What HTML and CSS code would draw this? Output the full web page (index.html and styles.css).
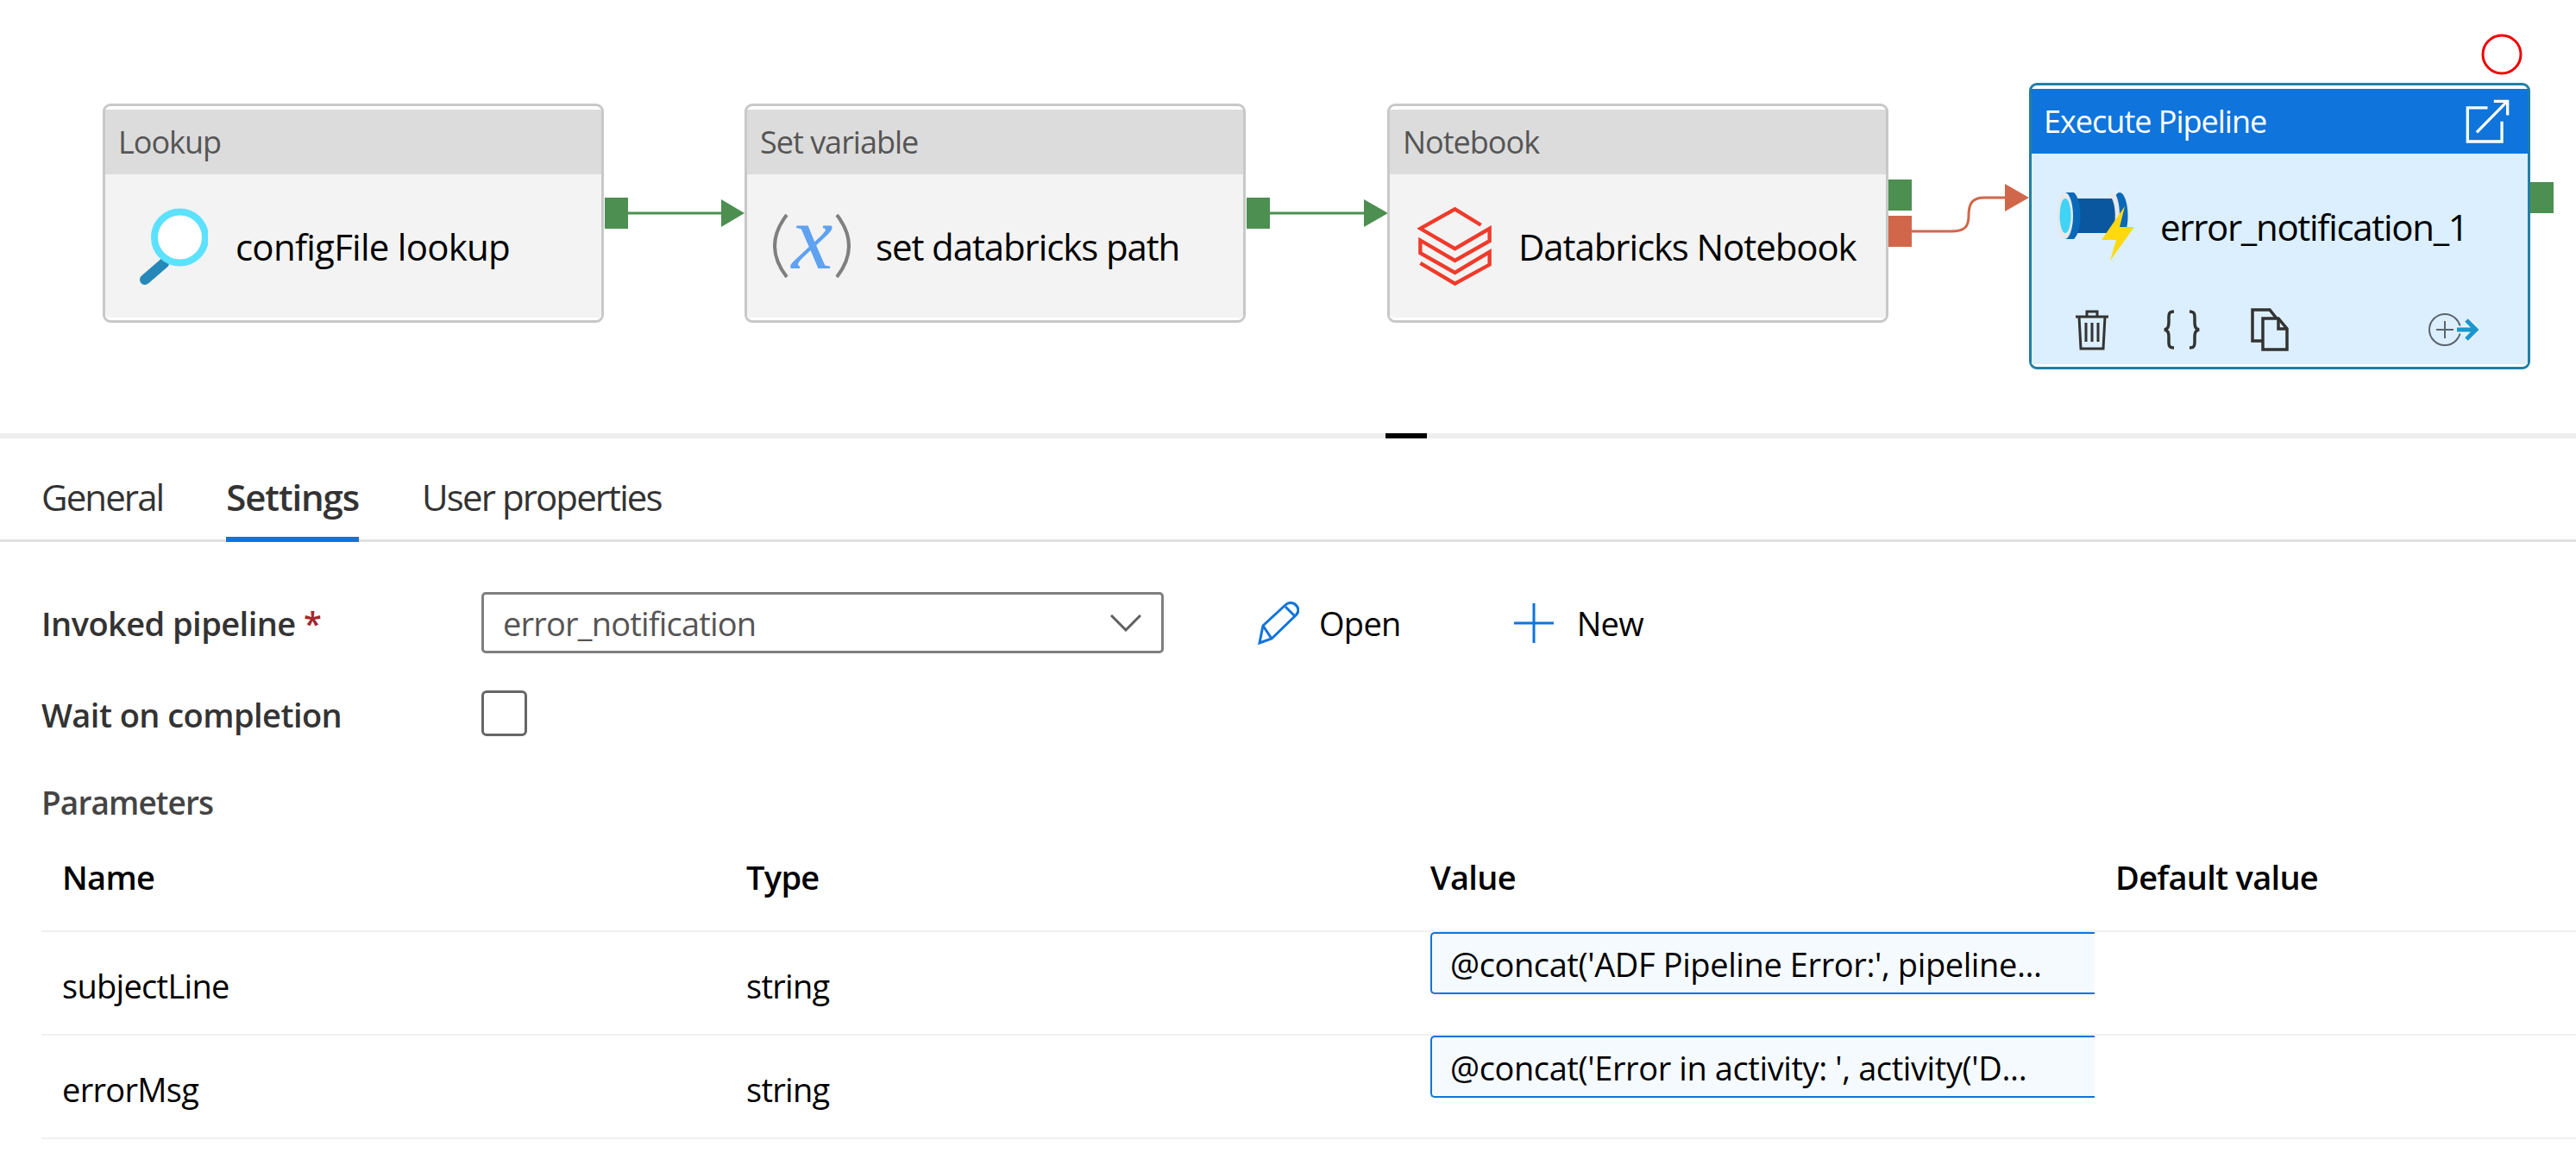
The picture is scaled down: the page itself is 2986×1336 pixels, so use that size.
FILE: index.html
```html
<!DOCTYPE html>
<html lang="en">
<head>
    <meta charset="UTF-8">
    <meta name="viewport" content="width=device-width, initial-scale=1.0">
    <title>Execute Pipeline settings</title>
    <link rel="stylesheet" href="styles.css">
</head>
<body>
    <!-- Pipeline canvas -->
    <div class="canvas">
        <svg class="wires" width="2986" height="502" viewBox="0 0 2986 502">
            <rect x="701" y="229" width="27" height="36" fill="#4c8f50"/>
            <path d="M728 247H840" stroke="#4c8f50" stroke-width="3" fill="none"/>
            <path d="M836 231L863 247L836 263Z" fill="#4c8f50"/>
            <rect x="1445" y="229" width="27" height="36" fill="#4c8f50"/>
            <path d="M1472 247H1585" stroke="#4c8f50" stroke-width="3" fill="none"/>
            <path d="M1581 231L1609 247L1581 263Z" fill="#4c8f50"/>
            <rect x="2189" y="208" width="27" height="36" fill="#4c8f50"/>
            <rect x="2189" y="250" width="27" height="36" fill="#d1674a"/>
            <path d="M2216 268H2262C2278 268 2282 262 2282 250C2282 236 2286 229 2300 229H2328" stroke="#d1674a" stroke-width="3" fill="none"/>
            <path d="M2324 213L2352 229L2324 245Z" fill="#d1674a"/>
            <rect x="2933" y="211" width="27" height="36" fill="#4c8f50"/>
            <circle cx="2900" cy="63" r="22" fill="none" stroke="#f00000" stroke-width="3"/>
        </svg>

        <div class="node node-lookup">
            <div class="node-head">Lookup</div>
            <div class="node-body">
                <svg class="node-icon" width="84" height="92" viewBox="0 0 84 92">
                    <path d="M33 66L11 85" stroke="#2489b8" stroke-width="12" stroke-linecap="round"/>
                    <circle cx="51.500" cy="36" r="29.500" fill="#fff" stroke="#5ce1ff" stroke-width="8"/>
                </svg>
                <span class="node-name">configFile lookup</span>
            </div>
        </div>

        <div class="node node-setvar">
            <div class="node-head">Set variable</div>
            <div class="node-body">
                <svg class="node-icon" width="92" height="144" viewBox="0 -34 92 144">
                    <path d="M17 2Q-11 38 17 74" stroke="#7f7f7f" stroke-width="4" fill="none"/>
                    <path d="M75 2Q103 38 75 74" stroke="#7f7f7f" stroke-width="4" fill="none"/>
                    <text x="46" y="64" class="var-x">x</text>
                </svg>
                <span class="node-name">set databricks path</span>
            </div>
        </div>

        <div class="node node-notebook">
            <div class="node-head">Notebook</div>
            <div class="node-body">
                <svg class="node-icon" width="87" height="92" viewBox="95 60 260 275" fill="none" stroke="#f03a2a" stroke-width="13">
                    <path d="M315 125L225 70L105 137L225 207L345 137V180L225 248L105 178V222L225 290L345 218V262L225 328L105 257"/>
                </svg>
                <span class="node-name">Databricks Notebook</span>
            </div>
        </div>

        <div class="node node-exec">
            <div class="node-head">
                <span>Execute Pipeline</span>
                <svg width="51" height="51" viewBox="213 72 154 154" fill="none" stroke="#fff" stroke-width="10">
                    <path d="M290 102H220V220H340V150"/>
                    <path d="M252 188L358 80"/>
                    <path d="M312 79H360V128"/>
                </svg>
            </div>
            <div class="node-body">
                <svg class="node-icon" width="90" height="80" viewBox="0 0 90 80">
                    <ellipse cx="73" cy="28" rx="9.500" ry="27" fill="#0a68b8"/>
                    <ellipse cx="65" cy="28" rx="8" ry="27" fill="#e6e8ea"/>
                    <path d="M24 8H64C69 18 69 38 64 48H24Z" fill="#0a57a0"/>
                    <path d="M10 1H20C30 10 30 46 20 55H10Z" fill="#0a68b8"/>
                    <ellipse cx="9.500" cy="28" rx="9.500" ry="27" fill="#e6e8ea"/>
                    <ellipse cx="10" cy="28" rx="6.500" ry="20" fill="#3fd4f6"/>
                    <path d="M79 17L52 56H69L62 80L90 41H73Z" fill="#ffd910"/>
                </svg>
                <span class="node-name">error_notification_1</span>
            </div>
            <div class="node-actions">
                <svg width="40" height="48" viewBox="0 0 40 48" fill="none" stroke="#333" stroke-width="3">
                    <path d="M1 9H39M5 9L7 46H33L35 9M14 9V3H26V9M13 16V38M20 16V38M27 16V38"/>
                </svg>
                <svg class="act-braces" width="44" height="46" viewBox="0 0 44 46" fill="none" stroke="#333" stroke-width="3.500">
                    <path d="M13 2C6 2 7 6 7 14C7 20 6 22 2 23C6 24 7 26 7 32C7 40 6 44 13 44"/>
                    <path d="M31 2C38 2 37 6 37 14C37 20 38 22 42 23C38 24 37 26 37 32C37 40 38 44 31 44"/>
                </svg>
                <svg class="act-copy" width="44" height="50" viewBox="0 0 44 50" fill="none" stroke="#333" stroke-width="3.500">
                    <path d="M14 38H2V2H22L30 12"/>
                    <path d="M14 12H32L42 24V48H14Z"/>
                    <path d="M32 12V24H42"/>
                </svg>
                <svg class="act-run" width="58" height="40" viewBox="0 0 58 40" fill="none">
                    <circle cx="19" cy="20" r="18" stroke="#5b6470" stroke-width="2"/>
                    <path d="M19 10V30M9 20H29" stroke="#5b6470" stroke-width="2"/>
                    <path d="M33 20H55M44 9L55 20L44 31" stroke="#e8f3fa" stroke-width="9"/>
                    <path d="M33 20H55M44 9L55 20L44 31" stroke="#1a97cc" stroke-width="5"/>
                </svg>
            </div>
        </div>
    </div>

    <div class="splitter"><span class="splitter-handle"></span></div>

    <!-- Tabs -->
    <div class="tabs">
        <a class="tab">General</a>
        <a class="tab active">Settings</a>
        <a class="tab">User properties</a>
    </div>

    <!-- Settings form -->
    <div class="settings">
        <div class="field field-pipeline">
            <label class="field-label">Invoked pipeline <span class="req">*</span></label>
            <div class="combo">
                <span>error_notification</span>
                <svg width="36" height="20" viewBox="0 0 36 20" fill="none" stroke="#5f5f5f" stroke-width="3">
                    <path d="M1 1L18 18L35 1"/>
                </svg>
            </div>
            <button class="cmd cmd-open">
                <svg width="48" height="50" viewBox="0 0 48 50" fill="none" stroke="#0f74dc" stroke-width="3">
                    <path d="M2 48L6 28L32 4C36 0 42 1 45 5C48 9 47 13 44 16L16 43Z"/>
                    <path d="M6 28L16 43M32 6L43 17"/>
                </svg>
                Open
            </button>
            <button class="cmd cmd-new">
                <svg width="46" height="46" viewBox="0 0 46 46" stroke="#0f74dc" stroke-width="3">
                    <path d="M23 0V46M0 23H46"/>
                </svg>
                New
            </button>
        </div>

        <div class="field field-wait">
            <label class="field-label">Wait on completion</label>
            <span class="checkbox"></span>
        </div>

        <div class="params-title">Parameters</div>

        <div class="params">
            <div class="row row-head">
                <div>Name</div>
                <div>Type</div>
                <div>Value</div>
                <div>Default value</div>
            </div>
            <div class="row">
                <div>subjectLine</div>
                <div>string</div>
                <div class="value-input">@concat('ADF Pipeline Error:', pipeline...</div>
                <div></div>
            </div>
            <div class="row">
                <div>errorMsg</div>
                <div>string</div>
                <div class="value-input">@concat('Error in activity: ', activity('D...</div>
                <div></div>
            </div>
        </div>
    </div>
</body>
</html>
```

FILE: styles.css
```css
* {
    box-sizing: border-box;
}
body {
    margin: 0;
    width: 2986px;
    height: 1336px;
    overflow: hidden;
    background: #fff;
    color: #000;
    font-family: "Open Sans", Arial, sans-serif;
    font-size: 38px;
    letter-spacing: -0.7px;
}

/* canvas */
.canvas {
    position: relative;
    height: 502px;
}
.wires {
    position: absolute;
    left: 0;
    top: 0;
}
.node {
    position: absolute;
    top: 120px;
    width: 581px;
    height: 254px;
    padding: 4px 0 3px;
    background: #fff;
    border: 3px solid #c8c8c8;
    border-radius: 9px;
    display: flex;
    flex-direction: column;
}
.node-lookup { left: 119px; }
.node-setvar { left: 863px; }
.node-notebook { left: 1608px; }
.node-exec {
    left: 2352px;
    top: 96px;
    height: 332px;
    border-color: #1f7fa5;
}
.node-head {
    height: 75px;
    flex: none;
    padding: 0 21px 0 15px;
    background: #dcdcdc;
    color: #555;
    font-size: 36px;
    letter-spacing: -1px;
    display: flex;
    align-items: center;
    justify-content: space-between;
}
.node-body {
    flex: 1;
    background: #f3f3f3;
    display: flex;
    align-items: center;
    padding-left: 35px;
    gap: 32px;
}
.node-name {
    white-space: nowrap;
    font-size: 42px;
    letter-spacing: -1.1px;
}
.node-lookup .node-name {
    letter-spacing: -0.75px;
}
.node-setvar .node-icon {
    margin-left: -6px;
    margin-right: -4px;
}
.node-notebook .node-icon {
    margin: 0 -2px 0 -3px;
}
.node-exec .node-head {
    padding-left: 14px;
    background: #0f74dc;
    color: #fff;
}
.node-exec .node-body {
    flex: none;
    height: 168px;
    background: #dcefff;
    align-items: flex-start;
    padding-top: 44px;
}
.node-exec .node-icon {
    margin-left: -6px;
}
.node-exec .node-name {
    margin: 12px 0 0 -2px;
    letter-spacing: -1.3px;
}
.node-actions {
    flex: 1;
    background: #dcefff;
    display: flex;
    align-items: center;
    padding: 0 0 4px 50px;
}
.act-braces { margin-left: 62px; }
.act-copy { margin-left: 58px; }
.act-run { margin-left: 162px; }
.var-x {
    font-family: "Liberation Serif", serif;
    font-style: italic;
    font-size: 108px;
    fill: #5ea2f0;
    text-anchor: middle;
}

/* splitter */
.splitter {
    height: 6px;
    background: #eee;
}
.splitter-handle {
    display: block;
    width: 48px;
    height: 6px;
    background: #000;
    margin-left: 1606px;
}

/* tabs */
.tabs {
    height: 120px;
    display: flex;
    padding: 0 48px;
    gap: 73px;
    border-bottom: 3px solid #e0e0e0;
    font-size: 42px;
    letter-spacing: -1.9px;
}
.tab {
    height: 120px;
    line-height: 136px;
    color: #333;
}
.tab.active {
    font-weight: 600;
    letter-spacing: -1.1px;
    border-bottom: 6px solid #0f74dc;
}

/* form */
.settings {
    padding: 58px 0 0 48px;
}
.field {
    display: flex;
    align-items: center;
}
.field-label {
    width: 510px;
    flex: none;
    font-weight: 600;
    color: #333;
    letter-spacing: -0.55px;
}
.req {
    color: #a4262c;
}
.field-pipeline {
    height: 71px;
}
.combo {
    width: 791px;
    height: 71px;
    flex: none;
    border: 3px solid #7f7f7f;
    border-radius: 5px;
    padding: 0 23px 0 22px;
    color: #555;
    letter-spacing: -0.8px;
    display: flex;
    align-items: center;
    justify-content: space-between;
}
.cmd {
    display: flex;
    align-items: center;
    border: 0;
    padding: 0;
    background: none;
    font: inherit;
    letter-spacing: inherit;
    color: #000;
}
.cmd-open {
    margin-left: 109px;
    gap: 23px;
}
.cmd-new {
    margin-left: 131px;
    gap: 27px;
}
.field-wait {
    height: 53px;
    margin-top: 43px;
}
.field-wait .field-label {
    padding-top: 3px;
}
.checkbox {
    width: 53px;
    height: 53px;
    border: 3px solid #666;
    border-radius: 6px;
}
.params-title {
    margin-top: 52px;
    font-size: 37px;
    font-weight: 600;
    letter-spacing: -0.9px;
    color: #444;
    line-height: 50px;
}

/* parameter table */
.params {
    margin: 0;
}
.row {
    display: grid;
    grid-template-columns: 793px 793px 794px 1fr;
    height: 120px;
    padding: 6px 0 0 24px;
    align-items: center;
    border-bottom: 2px solid #f0f0f0;
}
.row-head {
    height: 125px;
    padding: 0 0 2px 24px;
    font-weight: 600;
}
.value-input {
    align-self: start;
    width: 770px;
    height: 72px;
    margin-top: -6px;
    padding-left: 21px;
    background: #f5faff;
    border: 2px solid #0f74dc;
    border-right: 0;
    border-radius: 5px 0 0 5px;
    line-height: 70px;
    letter-spacing: -0.4px;
    white-space: nowrap;
}
```
